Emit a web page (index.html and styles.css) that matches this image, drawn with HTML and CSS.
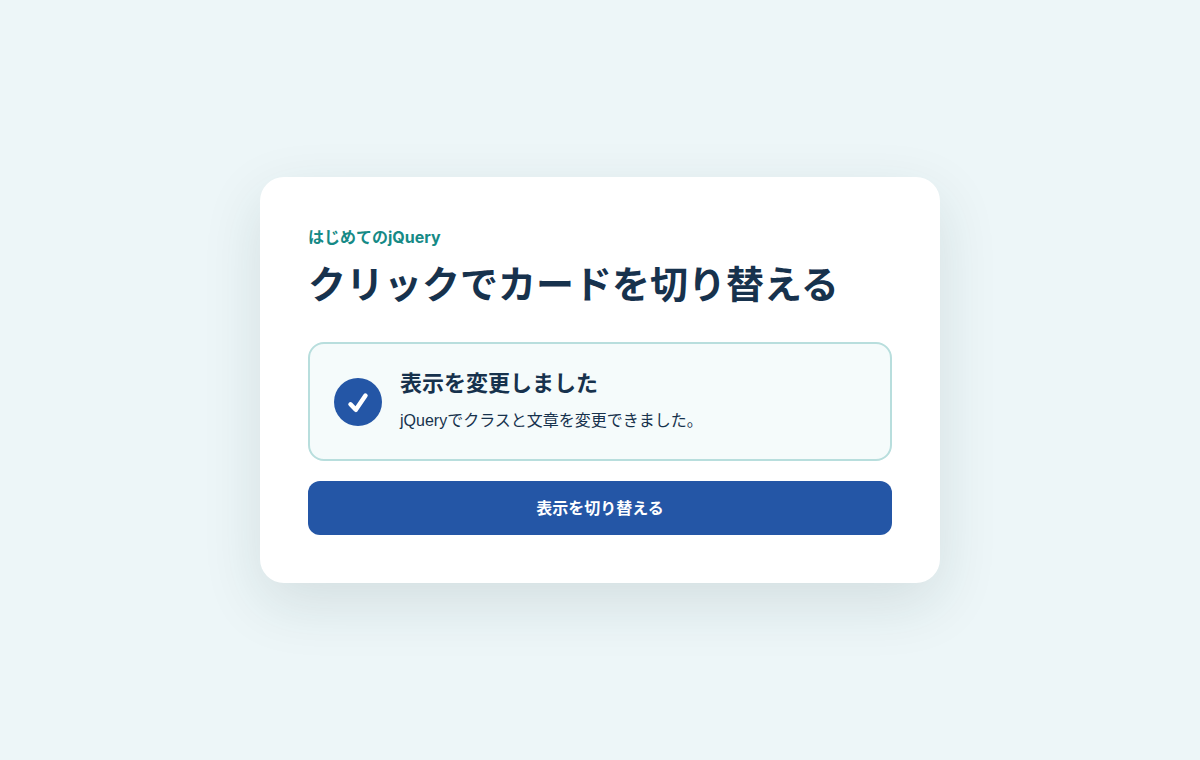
FILE: index.html
```html
<!DOCTYPE html>
<html lang="ja">
<head>
  <meta charset="UTF-8">
  <meta name="viewport" content="width=device-width, initial-scale=1">
  <title>はじめてのjQuery</title>
  <link rel="stylesheet" href="styles.css">
</head>
<body>
  <main class="panel">
    <p class="eyebrow">はじめてのjQuery</p>
    <h1 class="title">クリックでカードを切り替える</h1>
    <section class="status">
      <span class="status-icon">
        <svg viewBox="0 0 48 48" aria-hidden="true"><path d="M16.500 26.300L21.800 31.800L31.500 17.600"/></svg>
      </span>
      <div class="status-body">
        <h2 class="status-title">表示を変更しました</h2>
        <p class="status-text">jQueryでクラスと文章を変更できました。</p>
      </div>
    </section>
    <button class="toggle" type="button">表示を切り替える</button>
  </main>
</body>
</html>
```
FILE: styles.css
```css
* {
  box-sizing: border-box;
}

body {
  min-height: 100vh;
  margin: 0;
  display: grid;
  place-items: center;
  background: #edf6f8;
  color: #17324d;
  font-family: Inter, "Noto Sans CJK JP", sans-serif;
  font-size: 16px;
}

.panel {
  width: min(680px, calc(100% - 32px));
  padding: 48px;
  border-radius: 24px;
  background: #fff;
  box-shadow: 0 20px 60px rgba(24, 54, 58, 0.12);
}

.eyebrow {
  margin: 0 0 8px;
  color: #168a86;
  font-weight: 700;
  line-height: 24px;
}

.title {
  margin: 0 0 30px;
  font-size: 38px;
  font-weight: 700;
  line-height: 55px;
}

.status {
  display: flex;
  align-items: center;
  gap: 18px;
  padding: 24px;
  border: 2px solid #b8dedd;
  border-radius: 16px;
  background: #f5fbfb;
}

.status-icon {
  flex: none;
  width: 48px;
  height: 48px;
  border-radius: 50%;
  background: #2456a6;
}

.status-icon svg {
  display: block;
  fill: none;
  stroke: #fff;
  stroke-width: 4.5;
  stroke-linecap: round;
  stroke-linejoin: round;
}

.status-title {
  margin: 0 0 8px;
  font-size: 22px;
  font-weight: 700;
  line-height: 31px;
}

.status-text {
  margin: 0;
  font-family: "Liberation Sans", "Noto Sans CJK JP", sans-serif;
  line-height: 28px;
}

.toggle {
  width: 100%;
  margin-top: 20px;
  padding: 15px 20px;
  border: 0;
  border-radius: 12px;
  background: #2456a6;
  color: #fff;
  font: inherit;
  font-weight: 700;
  line-height: 24px;
  cursor: pointer;
}
```
